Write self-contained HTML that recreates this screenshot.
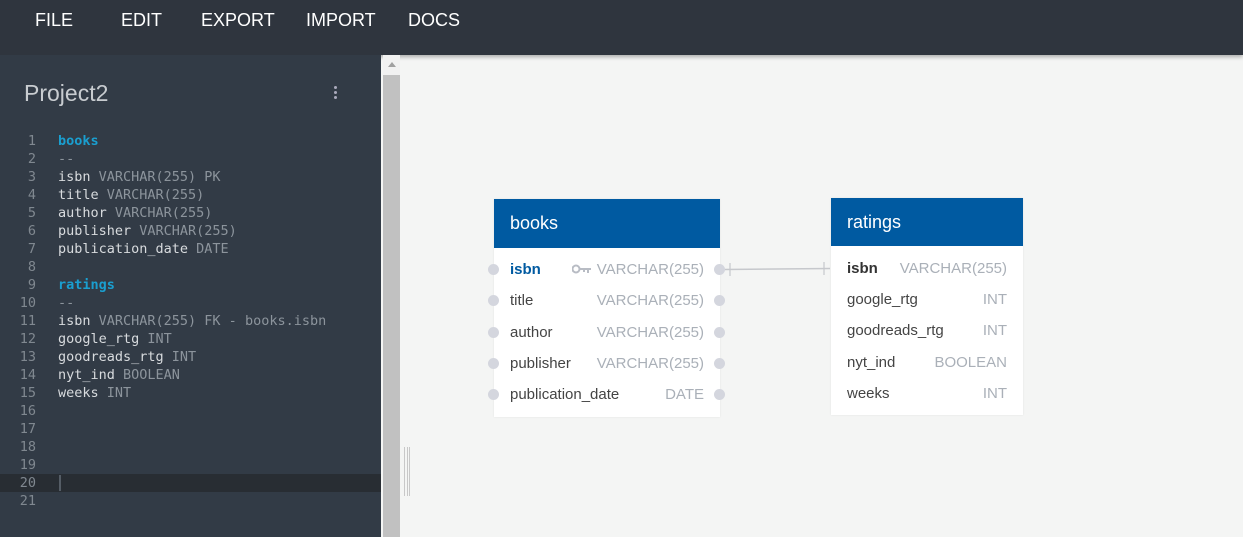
<!DOCTYPE html>
<html><head><style>
*{margin:0;padding:0;box-sizing:border-box}
body{width:1243px;height:537px;overflow:hidden;background:#f4f5f4;font-family:"Liberation Sans",sans-serif;position:relative}
.top{position:absolute;left:0;top:0;width:1243px;height:55px;background:#2f353e;box-shadow:0 2px 4px rgba(0,0,0,.3)}
.top span{position:absolute;top:10px;color:#fff;font-size:18px}
.ed{position:absolute;left:0;top:55px;width:381px;height:482px;background:#323b46}
.title{position:absolute;left:24px;top:80px;color:#c8ccd0;font-size:23px}
.dots{position:absolute;left:334px;top:86px;width:3px}
.dots i{display:block;width:3px;height:3px;background:#aab;margin-bottom:2px;border-radius:50%}
.code{position:absolute;left:0;top:132px;font-family:"DejaVu Sans Mono","Liberation Mono",monospace;font-size:13.5px;line-height:18px;color:#d8dbde}
.ln{position:relative;height:18px;white-space:pre}
.ln b{position:absolute;left:0;width:36px;text-align:right;font-weight:normal;color:#808890}
.ln span.t{position:absolute;left:58px}
.g{color:#8c949c}.k{color:#1a9fd0;font-weight:bold}
.cur{background:#282d33;width:381px}
.sb{position:absolute;left:383px;top:55px;width:17px;height:482px;background:#c1c1c1}
.sb .a{height:20px;background:#f1f1f1}
.tbl{position:absolute;background:#fff;box-shadow:0 0 2px rgba(0,0,0,.08)}
.hd{background:#005aa1;color:#fff;font-size:18px;padding-left:16px}
.row{position:absolute;left:16px;right:16px;font-size:15px;color:#444}
.row .ty{position:absolute;right:0;color:#aab0b8}
.dot{position:absolute;width:11px;height:11px;border-radius:50%;background:#d4d6de}
</style></head><body>
<div class="top"><span style="left:35px">FILE</span><span style="left:121px">EDIT</span><span style="left:201px">EXPORT</span><span style="left:306px">IMPORT</span><span style="left:408px">DOCS</span></div>
<div class="ed"></div>
<div class="title">Project2</div>
<div class="dots"><i></i><i></i><i></i></div>
<div class="code">
<div class="ln"><b>1</b><span class="t k">books</span></div>
<div class="ln"><b>2</b><span class="t g">--</span></div>
<div class="ln"><b>3</b><span class="t">isbn <span class="g">VARCHAR(255) PK</span></span></div>
<div class="ln"><b>4</b><span class="t">title <span class="g">VARCHAR(255)</span></span></div>
<div class="ln"><b>5</b><span class="t">author <span class="g">VARCHAR(255)</span></span></div>
<div class="ln"><b>6</b><span class="t">publisher <span class="g">VARCHAR(255)</span></span></div>
<div class="ln"><b>7</b><span class="t">publication_date <span class="g">DATE</span></span></div>
<div class="ln"><b>8</b></div>
<div class="ln"><b>9</b><span class="t k">ratings</span></div>
<div class="ln"><b>10</b><span class="t g">--</span></div>
<div class="ln"><b>11</b><span class="t">isbn <span class="g">VARCHAR(255) FK - books.isbn</span></span></div>
<div class="ln"><b>12</b><span class="t">google_rtg <span class="g">INT</span></span></div>
<div class="ln"><b>13</b><span class="t">goodreads_rtg <span class="g">INT</span></span></div>
<div class="ln"><b>14</b><span class="t">nyt_ind <span class="g">BOOLEAN</span></span></div>
<div class="ln"><b>15</b><span class="t">weeks <span class="g">INT</span></span></div>
<div class="ln"><b>16</b></div>
<div class="ln"><b>17</b></div>
<div class="ln"><b>18</b></div>
<div class="ln"><b>19</b></div>
<div class="ln cur"><b>20</b><span class="t" style="left:59px;top:1px;width:2px;height:16px;background:#555d66"></span></div>
<div class="ln"><b>21</b></div>
</div>
<div class="sb"><div class="a"></div></div>
<div style="position:absolute;left:388px;top:62px;border:4px solid transparent;border-bottom:5px solid #a0a0a0;border-top:0"></div>
<div style="position:absolute;left:404px;top:447px;width:4px;height:49px;border-left:1px solid #c8c8c8;border-right:1px solid #c8c8c8"></div>
<div style="position:absolute;left:407px;top:447px;width:3px;height:49px;border-right:1px solid #c8c8c8"></div>

<svg style="position:absolute;left:0;top:0" width="1243" height="537">
<line x1="724" y1="269.5" x2="830" y2="268.5" stroke="#c6c8cc" stroke-width="1.5"/>
<line x1="730" y1="263" x2="730" y2="276" stroke="#c6c8cc" stroke-width="1.2"/>
<line x1="824" y1="262" x2="824" y2="275" stroke="#c6c8cc" stroke-width="1.2"/>
</svg>

<div class="tbl" style="left:494px;top:199px;width:226px;height:218px">
<div class="hd" style="height:49px;line-height:49px">books</div>
<div class="row" style="top:62px"><span style="color:#005aa1;font-weight:bold">isbn</span>
<svg style="position:absolute;left:62px;top:3px" width="20" height="10"><circle cx="4" cy="5" r="3.5" fill="none" stroke="#b8bcc4" stroke-width="2"/><path d="M7 4h12v2h-2v3h-2V6h-2v2h-2V6H7z" fill="#b8bcc4"/></svg>
<span class="ty">VARCHAR(255)</span></div>
<div class="row" style="top:93px">title<span class="ty">VARCHAR(255)</span></div>
<div class="row" style="top:125px">author<span class="ty">VARCHAR(255)</span></div>
<div class="row" style="top:156px">publisher<span class="ty">VARCHAR(255)</span></div>
<div class="row" style="top:187px">publication_date<span class="ty">DATE</span></div>
</div>
<div class="dot" style="left:488px;top:264px"></div><div class="dot" style="left:714px;top:264px"></div>
<div class="dot" style="left:488px;top:295px"></div><div class="dot" style="left:714px;top:295px"></div>
<div class="dot" style="left:488px;top:327px"></div><div class="dot" style="left:714px;top:327px"></div>
<div class="dot" style="left:488px;top:358px"></div><div class="dot" style="left:714px;top:358px"></div>
<div class="dot" style="left:488px;top:389px"></div><div class="dot" style="left:714px;top:389px"></div>

<div class="tbl" style="left:831px;top:198px;width:192px;height:217px">
<div class="hd" style="height:48px;line-height:48px">ratings</div>
<div class="row" style="top:62px"><span style="color:#333;font-weight:bold">isbn</span><span class="ty">VARCHAR(255)</span></div>
<div class="row" style="top:93px">google_rtg<span class="ty">INT</span></div>
<div class="row" style="top:124px">goodreads_rtg<span class="ty">INT</span></div>
<div class="row" style="top:156px">nyt_ind<span class="ty">BOOLEAN</span></div>
<div class="row" style="top:187px">weeks<span class="ty">INT</span></div>
</div>
</body></html>
